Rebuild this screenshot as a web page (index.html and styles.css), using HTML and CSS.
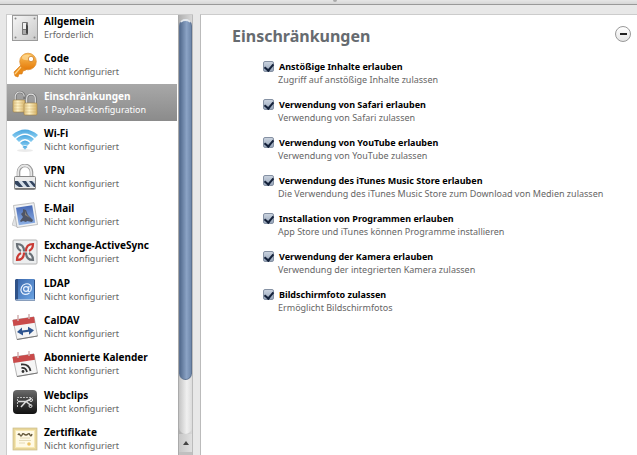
FILE: index.html
```html
<!DOCTYPE html>
<html lang="de">
<head>
    <meta charset="UTF-8">
    <meta name="viewport" content="width=device-width, initial-scale=1.0">
    <title>Einschränkungen</title>
    <link rel="stylesheet" href="styles.css">
</head>
<body>
    <div class="splitter"><span class="splitter-grip"></span></div>
    <div class="container">
        <div class="sidebar">
            <nav class="payload-list">
                <a class="payload" href="#allgemein">
                    <svg class="icon" viewBox="0 0 26 26">
                        <defs><linearGradient id="plate" x2="1" y2="1"><stop offset="0" stop-color="#f6f6f6"/><stop offset="1" stop-color="#c8c8c8"/></linearGradient></defs>
                        <rect x=".5" y=".5" width="25" height="25" fill="url(#plate)" stroke="#9b9b9b"/>
                        <g fill="#888"><circle cx="3.5" cy="3.5" r="1"/><circle cx="22.5" cy="3.5" r="1"/><circle cx="3.5" cy="22.5" r="1"/><circle cx="22.5" cy="22.5" r="1"/></g>
                        <rect x="10" y="7" width="6" height="13" rx="1" fill="#777"/>
                        <rect x="11" y="8" width="3" height="6" fill="#eee"/>
                        <path d="M11 15h3v4h-3z" fill="#aaa"/><path d="M14 9l2 2v8l-2-1z" fill="#444"/>
                    </svg>
                    <span class="payload-text"><b>Allgemein</b><small>Erforderlich</small></span>
                </a>
                <a class="payload" href="#code">
                    <svg class="icon" viewBox="0 0 26 26">
                        <defs><linearGradient id="key" x2="0" y2="1"><stop offset="0" stop-color="#fbc25c"/><stop offset="1" stop-color="#e57a08"/></linearGradient></defs>
                        <path d="M10 12L2 20l1 4 3 1 1-3 3 0 1-3 3-1 2-3z" fill="#e98a18" stroke="#d67a15" stroke-width=".6"/>
                        <path d="M9 15l-6 7" stroke="#ffd58a" stroke-width="1.2"/>
                        <circle cx="16" cy="9.5" r="8.3" fill="url(#key)" stroke="#dd8a2a" stroke-width=".7"/>
                        <ellipse cx="15" cy="5.5" rx="5" ry="2.8" fill="#ffe2a8" opacity=".6"/>
                        <circle cx="19" cy="7" r="2.7" fill="#fff" stroke="#c66d0c" stroke-width=".7"/>
                    </svg>
                    <span class="payload-text"><b>Code</b><small>Nicht konfiguriert</small></span>
                </a>
                <a class="payload selected" href="#einschraenkungen">
                    <svg class="icon" viewBox="0 0 26 26">
                        <defs><linearGradient id="brass" x2="1" y2="0"><stop offset="0" stop-color="#dcc080"/><stop offset=".4" stop-color="#fff3c8"/><stop offset="1" stop-color="#d6b46a"/></linearGradient></defs>
                        <path d="M3.5 11V6.5a4.5 4.5 0 0 1 9 0V9" fill="none" stroke="#777" stroke-width="2.4"/>
                        <path d="M3.2 11V6.5a4.5 4.5 0 0 1 9 0" fill="none" stroke="#ddd" stroke-width="1.2"/>
                        <rect x="1" y="10" width="12" height="12" rx="1" fill="url(#brass)" stroke="#a18140" stroke-width=".6"/>
                        <path d="M15 14V8.5a4.3 4.3 0 0 1 8.6 0V14" fill="none" stroke="#777" stroke-width="2.4"/>
                        <path d="M14.7 14V8.5a4.3 4.3 0 0 1 8.6 0V14" fill="none" stroke="#e3e3e3" stroke-width="1.2"/>
                        <rect x="12" y="13" width="13" height="12" rx="1" fill="url(#brass)" stroke="#a18140" stroke-width=".6"/>
                        <path d="M2 13h9M2 16h9M2 19h9M13 16h11M13 19h11M13 22h11" stroke="#b89147" stroke-width=".3"/>
                    </svg>
                    <span class="payload-text"><b>Einschränkungen</b><small>1 Payload-Konfiguration</small></span>
                </a>
                <a class="payload" href="#wifi">
                    <svg class="icon" viewBox="0 0 26 26">
                        <defs><linearGradient id="wifi" x2="0" y2="1"><stop offset="0" stop-color="#4aa5de"/><stop offset="1" stop-color="#8bcff2"/></linearGradient></defs>
                        <ellipse cx="13" cy="23.5" rx="8" ry="1.5" fill="#ddd" opacity=".6"/>
                        <g fill="url(#wifi)"><path d="M0 8Q13-3 26 8l-3 3Q13 2 3 11z"/><path d="M4 12Q13 4 22 12l-3 3Q13 9 7 15z"/><path d="M8 16q5-5 10 0l-3 3q-2-2-4 0z"/><path d="M10.5 20q2.5-2.5 5 0L13 22.8z"/></g>
                    </svg>
                    <span class="payload-text"><b>Wi-Fi</b><small>Nicht konfiguriert</small></span>
                </a>
                <a class="payload" href="#vpn">
                    <svg class="icon" viewBox="0 0 26 26">
                        <path d="M6.5 13V8a6.5 6.5 0 0 1 13 0v5" fill="none" stroke="#999" stroke-width="3.6"/>
                        <path d="M6.2 13V8a6.5 6.5 0 0 1 13 0v5" fill="none" stroke="#e6e6e6" stroke-width="1.8"/>
                        <rect x="2.5" y="12.5" width="21" height="13" rx="1" fill="#ececec" stroke="#888"/>
                        <path d="M3 17h20v6H3z" fill="#34455f"/>
                        <path d="M3 20l4 3H3zM6 17h4l5 6h-4zM14 17h3l5 6h-4zM20 17h3v3z" fill="#d5dfea"/>
                        <path d="M3 24.5h20" stroke="#777"/>
                    </svg>
                    <span class="payload-text"><b>VPN</b><small>Nicht konfiguriert</small></span>
                </a>
                <a class="payload" href="#email">
                    <svg class="icon" viewBox="0 0 26 26">
                        <defs><linearGradient id="sky" x2="0" y2="1"><stop offset="0" stop-color="#4668b5"/><stop offset="1" stop-color="#8fb2e6"/></linearGradient></defs>
                        <path d="M3 14L0 23l6 2z" fill="#e2e4e6" stroke="#aaa" stroke-width=".5"/>
                        <path d="M1.5 3.5L22 .7 25.5 22.5 5 25.5z" fill="#f0f2f4" stroke="#a8a8a8" stroke-width=".7"/>
                        <path d="M4 5.8L20.2 3.2l3 17.6L6.8 23.3z" fill="url(#sky)"/>
                        <path d="M11 7l3 1 2 5 5 5-1 2-5-1-1 1-3-1-2 1-1-1 3-4-2-3 2-2z" fill="#4d5467"/>
                        <path d="M13 9l1 3 4 4-5-3z" fill="#8f877b"/>
                    </svg>
                    <span class="payload-text"><b>E-Mail</b><small>Nicht konfiguriert</small></span>
                </a>
                <a class="payload" href="#exchange">
                    <svg class="icon" viewBox="0 0 26 26">
                        <rect x="1" y="1" width="24" height="24" rx="1" fill="#eceeef" stroke="#b4b4b4"/>
                        <g fill="none" stroke-width="2.2">
                            <path d="M12 12.5Q12 5 5 5q0 5 4 7" stroke="#697077"/>
                            <path d="M14 13.5Q14 21 21 21q0-5-4-7" stroke="#697077"/>
                            <path d="M14 12.5Q14 5 21 5q0 5-4 7" stroke="#c93a34"/>
                            <path d="M12 13.5Q12 21 5 21q0-5 4-7" stroke="#c93a34"/>
                        </g>
                    </svg>
                    <span class="payload-text"><b>Exchange-ActiveSync</b><small>Nicht konfiguriert</small></span>
                </a>
                <a class="payload" href="#ldap">
                    <svg class="icon" viewBox="0 0 26 26">
                        <defs><linearGradient id="book" x2="1" y2="1"><stop offset="0" stop-color="#3d6aae"/><stop offset="1" stop-color="#6ba4e3"/></linearGradient></defs>
                        <path d="M4 2h18l1 1v21H4L3 22V3z" fill="#2f5288"/>
                        <rect x="6" y="2" width="16" height="21" fill="url(#book)"/>
                        <path d="M4 23h19" stroke="#e4e9ef"/>
                        <g fill="none" stroke="#e9f2ff" stroke-width="1.2"><circle cx="14" cy="12" r="2.4"/><path d="M17 9l-.7 5q1 1.5 2.5-.5c2-5-2-7.5-5.5-6.5S8 12 9.5 15s5 3 8 1"/></g>
                    </svg>
                    <span class="payload-text"><b>LDAP</b><small>Nicht konfiguriert</small></span>
                </a>
                <a class="payload" href="#caldav">
                    <svg class="icon" viewBox="0 0 26 26">
                        <path d="M1 6l21-3 3.5 19L5 25.5z" fill="#f5f5f5" stroke="#999" stroke-width=".7"/>
                        <path d="M.5 6L22 2.8l1 6L1.5 12z" fill="#c94a4a"/>
                        <path d="M6 1v6M17 0v5" stroke="#d4b0b0" stroke-width="1.5"/>
                        <path d="M5 18l5-4.500v3l6-.8v-3l6 3.5-5 4.500v-3l-6 .8v3z" fill="#2f5590"/>
                        <path d="M5 25.5l20.5-3.5" stroke="#777"/>
                    </svg>
                    <span class="payload-text"><b>CalDAV</b><small>Nicht konfiguriert</small></span>
                </a>
                <a class="payload" href="#kalender">
                    <svg class="icon" viewBox="0 0 26 26">
                        <path d="M1 6l21-3 3.5 19L5 25.5z" fill="#f5f5f5" stroke="#999" stroke-width=".7"/>
                        <path d="M.5 6L22 2.8l1 6L1.5 12z" fill="#c94a4a"/>
                        <path d="M6 1v6M17 0v5" stroke="#d4b0b0" stroke-width="1.5"/>
                        <g fill="none" stroke="#333" stroke-width="1.8"><path d="M9 13.5q8-1 9.5 6.5"/><path d="M9.5 17q4.5-.5 5.5 4"/></g>
                        <circle cx="11" cy="20.5" r="1.4" fill="#333"/>
                        <path d="M5 25.5l20.5-3.5" stroke="#777"/>
                    </svg>
                    <span class="payload-text"><b>Abonnierte Kalender</b><small>Nicht konfiguriert</small></span>
                </a>
                <a class="payload" href="#webclips">
                    <svg class="icon" viewBox="0 0 26 26">
                        <defs><linearGradient id="dark" x2="0" y2="1"><stop offset="0" stop-color="#6b6b6b"/><stop offset=".5" stop-color="#3a3a3a"/><stop offset="1" stop-color="#111"/></linearGradient></defs>
                        <rect x="1" y="1" width="24" height="24" rx="4" fill="url(#dark)"/>
                        <path d="M5.5 18V8.5h15" stroke="#bbb" stroke-dasharray="2 1" fill="none"/>
                        <path d="M6 12.5h8l5-2.5M9 18l5-5.5 5 4" stroke="#ddd" stroke-width="1.5" fill="none"/>
                        <g fill="none" stroke="#ddd"><circle cx="19" cy="11" r="1.5"/><circle cx="18.5" cy="17" r="1.5"/></g>
                    </svg>
                    <span class="payload-text"><b>Webclips</b><small>Nicht konfiguriert</small></span>
                </a>
                <a class="payload" href="#zertifikate">
                    <svg class="icon" viewBox="0 0 26 26">
                        <rect x="1" y="2" width="24" height="22" fill="#e8d699" stroke="#c9bb8a" stroke-width=".7"/>
                        <rect x="3.5" y="4.5" width="19" height="17" fill="#fffae6" stroke="#f6e8b4"/>
                        <path d="M6 9q1-2 2 0t2 0 2-1 2 1 2-1 2 1 2-1" stroke="#665a3c" stroke-width="1.4" fill="none"/>
                        <path d="M8 12h10M7 14.5h12M7 17h6" stroke="#ddd2ab" stroke-width=".8"/>
                        <circle cx="17" cy="18" r="1.8" fill="#ecc466"/>
                    </svg>
                    <span class="payload-text"><b>Zertifikate</b><small>Nicht konfiguriert</small></span>
                </a>
            </nav>
            <div class="scrollbar">
                <div class="scroll-track"><div class="scroll-thumb"></div></div>
                <button class="scroll-up" type="button" aria-label="Nach oben"></button>
            </div>
        </div>

        <main class="detail">
            <div class="detail-header">
                <h1>Einschränkungen</h1>
                <button class="remove-btn" type="button" aria-label="Entfernen"></button>
            </div>
            <form class="options">
                <div class="option">
                    <input type="checkbox" id="inhalte" checked>
                    <label for="inhalte">Anstößige Inhalte erlauben</label>
                    <p>Zugriff auf anstößige Inhalte zulassen</p>
                </div>
                <div class="option">
                    <input type="checkbox" id="safari" checked>
                    <label for="safari">Verwendung von Safari erlauben</label>
                    <p>Verwendung von Safari zulassen</p>
                </div>
                <div class="option">
                    <input type="checkbox" id="youtube" checked>
                    <label for="youtube">Verwendung von YouTube erlauben</label>
                    <p>Verwendung von YouTube zulassen</p>
                </div>
                <div class="option">
                    <input type="checkbox" id="itunes" checked>
                    <label for="itunes">Verwendung des iTunes Music Store erlauben</label>
                    <p>Die Verwendung des iTunes Music Store zum Download von Medien zulassen</p>
                </div>
                <div class="option">
                    <input type="checkbox" id="programme" checked>
                    <label for="programme">Installation von Programmen erlauben</label>
                    <p>App Store und iTunes können Programme installieren</p>
                </div>
                <div class="option">
                    <input type="checkbox" id="kamera" checked>
                    <label for="kamera">Verwendung der Kamera erlauben</label>
                    <p>Verwendung der integrierten Kamera zulassen</p>
                </div>
                <div class="option">
                    <input type="checkbox" id="bildschirmfoto" checked>
                    <label for="bildschirmfoto">Bildschirmfoto zulassen</label>
                    <p>Ermöglicht Bildschirmfotos</p>
                </div>
            </form>
        </main>
    </div>
</body>
</html>
```
FILE: styles.css
```css
* {
  box-sizing: border-box;
}
body {
  margin: 0;
  height: 100vh;
  display: flex;
  flex-direction: column;
  overflow: hidden;
  background-color: #e8e8e8;
  font-family: "Noto Sans", "Open Sans", sans-serif;
  color: #000;
}
.splitter {
  display: flex;
  justify-content: center;
  height: 5px;
  flex: none;
  padding-left: 32px;
  background: linear-gradient(#e6e6e6, #d6d6d6);
  border-bottom: 1px solid #999;
}
.splitter-grip {
  width: 4px;
  height: 2px;
  border-radius: 0 0 2px 2px;
  background-color: #aaa;
}
.container {
  display: flex;
  flex: 1;
  gap: 7px;
  min-height: 0;
  padding: 9px 0 0 6px;
}

/* payload list */
.sidebar {
  display: flex;
  width: 187px;
  flex: none;
  overflow: hidden;
  border-top: 1px solid #ccc;
  border-left: 1px solid #ccc;
  background-color: #fff;
}
.payload-list {
  display: grid;
  grid-auto-rows: minmax(37px, 1fr);
  flex: 1;
  margin: -6px 0 -3px;
}
.payload {
  display: flex;
  align-items: center;
  gap: 6px;
  padding-left: 5px;
  color: #000;
  text-decoration: none;
}
.payload.selected {
  margin-right: 1px;
  background: linear-gradient(#a8a8a8, #8b8b8b);
  color: #fff;
}
.icon {
  width: 26px;
  height: 26px;
  flex: none;
}
.payload-text {
  display: flex;
  flex-direction: column;
  white-space: nowrap;
}
.payload-text b {
  font-size: 10px;
  line-height: 13px;
}
.payload-text small {
  font-size: 9px;
  line-height: 13px;
  color: #666;
}
.selected small {
  color: #fff;
}

/* scrollbar */
.scrollbar {
  display: flex;
  flex-direction: column;
  width: 15px;
  border-left: 1px solid #aaa;
  border-right: 1px solid #bbb;
  background: linear-gradient(to right, #b0b0b0, #d8d8d8);
}
.scroll-track {
  flex: 1;
  margin-top: 4px;
  border-radius: 7px;
  background: linear-gradient(to right, #c4c4c4, #f0f0f0 60%, #dcdcdc);
}
.scroll-thumb {
  height: 87%;
  border: 1px solid #5d7291;
  border-top: 2px solid #e2e7ed;
  border-radius: 7px;
  background: linear-gradient(to right, #536b8e, #8ba3c5 60%, #6f88ab);
}
.scroll-up {
  display: flex;
  align-items: center;
  justify-content: center;
  height: 21px;
  padding: 0;
  border: none;
  border-bottom: 3px solid #c0c0c0;
  background: linear-gradient(to right, #c8c8c8, #e0e0e0);
}
.scroll-up::before {
  content: "";
  border: 3px solid transparent;
  border-top: none;
  border-bottom: 4px solid #444;
}

/* settings */
.detail {
  flex: 1;
  min-width: 0;
  border-top: 1px solid #ccc;
  border-left: 1px solid #bbb;
  background-color: #fff;
}
.detail-header {
  display: flex;
  align-items: flex-start;
  justify-content: space-between;
  padding: 9px 6px 0 31px;
}
.detail-header h1 {
  margin: 0;
  font-size: 16px;
  line-height: 24px;
  color: #666b70;
}
.remove-btn {
  display: flex;
  align-items: center;
  justify-content: center;
  width: 16px;
  height: 16px;
  margin-top: 2px;
  padding: 0;
  border: 1px solid #999;
  border-radius: 50%;
  background: linear-gradient(#fff, #e6e6e6);
}
.remove-btn::before {
  content: "";
  width: 7px;
  height: 2px;
  background-color: #222;
}
.options {
  display: grid;
  gap: 12px;
  padding: 12px 0 0 62px;
}
.option {
  display: grid;
  grid-template-columns: 12px 1fr;
  column-gap: 3px;
  align-items: center;
}
.option label {
  padding-left: 1px;
  font-size: 9px;
  font-weight: bold;
  line-height: 13px;
}
.option p {
  grid-column: 2;
  margin: 0;
  font-size: 9px;
  line-height: 13px;
  color: #666;
  white-space: nowrap;
}
.option input {
  appearance: none;
  display: grid;
  place-items: center;
  width: 11px;
  height: 11px;
  margin: 0;
  border: 1px solid #8591a3;
  border-radius: 2px;
  background: linear-gradient(#c9d2de, #98a6ba);
}
.option input:checked::before {
  content: "";
  width: 4px;
  height: 7px;
  margin-bottom: 4px;
  border: solid #14213a;
  border-width: 0 2px 2px 0;
  transform: rotate(40deg);
}
```
